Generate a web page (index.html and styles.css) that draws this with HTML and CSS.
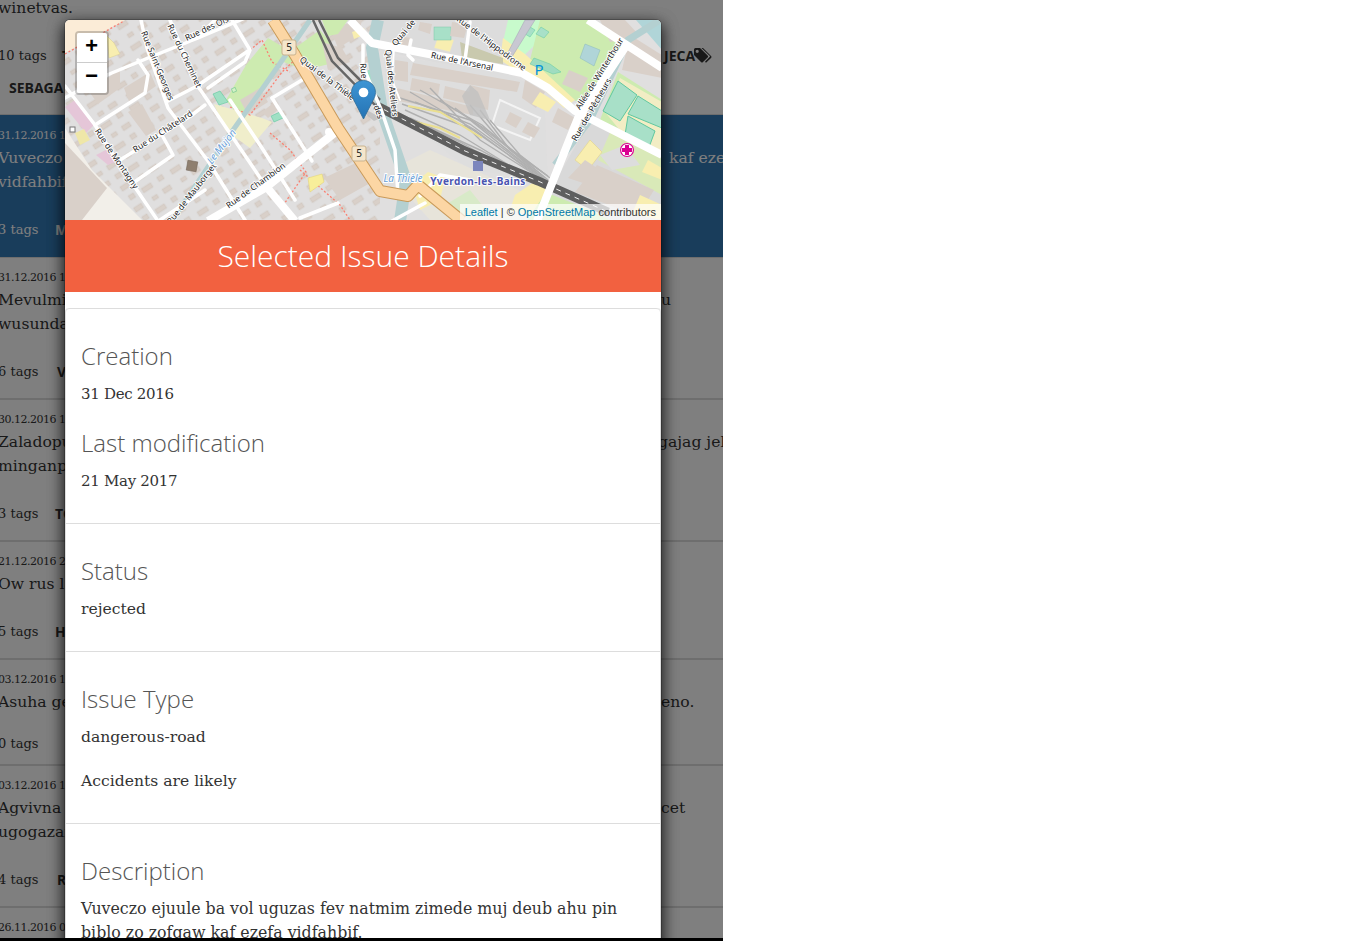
FILE: index.html
```html
<!DOCTYPE html>
<html lang="en">
<head>
<meta charset="utf-8">
<title>Selected Issue Details</title>
<link rel="stylesheet" href="styles.css">
</head>
<body>
<div class="page">
  <div class="list">
    <div class="row first">
      <div class="title"><span class="l">winetvas.</span></div>
      <div class="tags"><span class="count">10 tags</span><b class="tag">TEJA</b><b class="tag tag-right">JECA</b>
        <svg class="tag-icon" viewBox="0 0 18 15"><path d="M0 1.5V7l7 7a1.4 1.4 0 0 0 2 0l4.600-4.600a1.4 1.4 0 0 0 0-2L6.600.4A1.4 1.4 0 0 0 5.600 0H1.500A1.500 1.500 0 0 0 0 1.500zM3.200 4.900a1.600 1.600 0 1 1 0-3.200 1.600 1.600 0 0 1 0 3.200z"/><path d="M9 0l8 8a1.400 1.400 0 0 1 0 2l-5 4.800-1-1 4.600-4.700a1 1 0 0 0 0-1.400L7.500 0z"/></svg>
      </div>
      <div class="tags tags-2"><b class="tag">SEBAGA</b></div>
    </div>
    <div class="row active">
      <div class="date">31.12.2016 11:04</div>
      <div class="title"><span class="l">Vuveczo ejuule ba vol uguzas fev</span><span class="r r-kaf">kaf eze</span></div>
      <div class="title"><span class="l">vidfahbif.</span></div>
      <div class="tags"><span class="count">3 tags</span><b class="tag">MEKU</b></div>
    </div>
    <div class="row">
      <div class="date">31.12.2016 10:12</div>
      <div class="title"><span class="l">Mevulmi ko gewoc ezi</span><span class="r">u</span></div>
      <div class="title"><span class="l">wusundaj.</span></div>
      <div class="tags"><span class="count">6 tags</span><b class="tag tag-wide">VOZ</b></div>
    </div>
    <div class="row">
      <div class="date">30.12.2016 14:20</div>
      <div class="title"><span class="l">Zaladopu ri tenof</span><span class="r r-gaj">gajag jel</span></div>
      <div class="title"><span class="l">minganpo.</span></div>
      <div class="tags"><span class="count">3 tags</span><b class="tag">TOR</b></div>
    </div>
    <div class="row">
      <div class="date">21.12.2016 21:02</div>
      <div class="title"><span class="l">Ow rus lav tu.</span></div>
      <div class="tags"><span class="count">5 tags</span><b class="tag">HEB</b></div>
    </div>
    <div class="row no-tags">
      <div class="date">03.12.2016 16:45</div>
      <div class="title"><span class="l">Asuha ge vone</span><span class="r">eno.</span></div>
      <div class="tags"><span class="count">0 tags</span></div>
    </div>
    <div class="row">
      <div class="date">03.12.2016 11:31</div>
      <div class="title"><span class="l">Agvivna ro dunaf</span><span class="r">cet</span></div>
      <div class="title"><span class="l">ugogazaf.</span></div>
      <div class="tags"><span class="count">4 tags</span><b class="tag tag-wide">RUZ</b></div>
    </div>
    <div class="row">
      <div class="date">26.11.2016 09:17</div>
    </div>
  </div>

  <div class="backdrop"></div>

  <div class="modal">
    <div class="map">
      <svg class="map-art" viewBox="65 20 597 200" xmlns="http://www.w3.org/2000/svg">
        <defs>
          <pattern id="houses" patternUnits="userSpaceOnUse" width="34" height="25" patternTransform="rotate(-33 65 20)">
            <rect x="3" y="3" width="11" height="5" fill="#d9d0c9" stroke="#c8bdb4" stroke-width=".4"/>
            <rect x="22" y="2" width="6" height="5" fill="#d9d0c9" stroke="#c8bdb4" stroke-width=".4"/>
            <rect x="7" y="16" width="6" height="4" fill="#d9d0c9" stroke="#c8bdb4" stroke-width=".4"/>
            <rect x="20" y="15" width="9" height="5" fill="#d9d0c9" stroke="#c8bdb4" stroke-width=".4"/>
          </pattern>
          <linearGradient id="pin" x1="0" y1="0" x2="0" y2="1">
            <stop offset="0" stop-color="#3d95d4"/>
            <stop offset="1" stop-color="#2573b4"/>
          </linearGradient>
        </defs>

        <rect x="65" y="20" width="597" height="200" fill="#e0dfdf"/>
        <rect x="65" y="20" width="315" height="200" fill="url(#houses)"/>
        <!-- land use, west -->
        <polygon points="65,20 125,20 65,53" fill="#fbecd7"/>
        <polyline points="65,54 124,21" class="foot-pink"/>
        <polygon points="65,128 92,170 142,220 65,220" fill="#f2efe9"/>
        <polygon points="65,143 107,188 82,220 65,220" fill="#d9d0c9"/>
        <polygon points="65,107 75,100 94,125 86,133" fill="#e5c6d8"/>
        <polygon points="96,155 110,148 120,160 108,165" fill="#e5c6d8"/>
        <polygon points="107,36 114,43 120,54 109,58" fill="#f8eeb0" stroke="#d8cf90" stroke-width=".5"/>
        <polygon points="75,133 84,129 90,140 80,145" fill="#efe7a8"/>
        <polygon points="88,90 120,70 120,88 98,104" fill="#d9d0c9"/>
        <polygon points="124,88 150,72 156,86 130,104" fill="#d9d0c9"/>
        <polygon points="128,112 142,104 156,130 146,136" fill="#d9d0c9"/>
        <!-- park, west centre -->
        <polygon points="226,100 246,65 268,38 288,50 265,85 240,118" fill="#cdebb0"/>
        <polygon points="278,60 320,30 345,60 305,70" fill="#cdebb0"/>
        <polygon points="214,104 262,118 272,122 250,148 225,130" fill="#f0eecb"/>
        <polygon points="213,94 220,91 228,102 219,105" fill="#9fe0c4" stroke="#60c8a0" stroke-width=".6"/>
        <polygon points="271,116 280,112 283,118 274,122" fill="#9fe0c4" stroke="#60c8a0" stroke-width=".6"/>
        <rect x="232" y="88" width="4" height="4" fill="#d4f2c4" stroke="#6fc68f" stroke-width=".6" transform="rotate(-20 234 90)"/>
        <polygon points="240,100 260,88 268,102 248,115" fill="#d9d0c9"/>
        <polygon points="262,112 272,104 278,110 268,118" fill="#d9d0c9"/>
        <polyline points="230,107 250,115 265,95 282,72 300,55" class="foot-pink"/>
        <polyline points="250,50 262,40 272,62 290,72" class="foot-pink"/>
        <polyline points="270,133 290,150 306,172 280,210" class="foot-pink"/>
        <polyline points="300,170 340,205 350,220" class="foot-pink"/>
        <polygon points="308,178 322,174 324,182 310,192" fill="#f8ee9a" stroke="#e0d070" stroke-width=".5"/>
        <polygon points="324,178 362,160 372,182 340,200" fill="#d9d0c9"/>
        <polygon points="330,28 362,20 358,36 338,48" fill="#d9d0c9"/>
        <polygon points="322,42 342,48 350,62 328,70" fill="#d9d0c9"/>
        <polygon points="352,32 364,28 366,34 354,39" fill="#f8eeb0"/>
        <polygon points="322,20 348,20 338,34 328,36" fill="#cdebb0"/>
        <polygon points="368,70 372,70 372,90 366,90" fill="#9fe0c4"/>

        <!-- land use, east -->
        <polygon points="380,20 540,20 530,75 470,70 380,50" fill="#dcdcdc"/>
        <polygon points="385,55 505,72 530,85 545,108 548,180 470,170 385,105" fill="#dedede"/>
        <polygon points="508,20 545,20 534,46 521,58 503,42" fill="#c8facc"/>
        <polygon points="540,20 590,20 628,46 585,108 545,78 530,60" fill="#cdebb0"/>
        <polygon points="503,38 525,54 575,100 564,108 540,86 500,60" fill="#f8eeb0"/>
        <polygon points="460,42 503,58 503,64 462,58" fill="#c9c9ae"/>
        <polygon points="438,36 454,40 450,52 434,48" fill="#f8eeb0" stroke="#ddd" stroke-width=".5"/>
        <rect x="434" y="27" width="17" height="13" fill="#a8e0c8" stroke="#7cc8a8" stroke-width=".5"/>
        <polygon points="420,22 432,24 430,34 418,30" fill="#d9d0c9"/>
        <polygon points="396,36 412,38 410,48 394,44" fill="#d9d0c9"/>
        <polygon points="452,22 468,24 464,38 450,36" fill="#d9d0c9"/>
        <polygon points="527,25 535,30 530,37 522,32" fill="#a8e0c8" stroke="#60c8a0" stroke-width=".5"/>
        <polygon points="541,27 549,32 544,38 536,34" fill="#a8e0c8" stroke="#60c8a0" stroke-width=".5"/>
        <polygon points="534,58 550,64 561,72 553,74 530,64" fill="#9fdcc0" stroke="#60c8a0" stroke-width=".5"/>
        <polygon points="569,70 588,78 580,92 562,84" fill="#d9d0c9"/>
        <polygon points="585,44 600,50 594,66 580,58" fill="#b0d5d8" stroke="#8ab8bd" stroke-width=".5"/>
        <polygon points="600,20 625,20 640,36 610,42" fill="#d9d0c9"/>
        <polygon points="630,35 662,55 662,78 622,70" fill="#d9d0c9"/>
        <polygon points="636,20 662,20 662,50" fill="#b0d5d8"/>
        <polygon points="600,120 618,72 662,100 662,148" fill="#cdebb0"/>
        <polygon points="605,112 620,78 662,102 662,150 640,155" fill="#f2edc4"/>
        <polygon points="618,81 637,95 620,121 603,111" fill="#a8e0c8" stroke="#60c8a0"/>
        <polygon points="638,96 662,111 662,128 628,114" fill="#a8e0c8" stroke="#60c8a0"/>
        <polygon points="628,116 655,131 648,150 625,135" fill="#a8e0c8" stroke="#60c8a0"/>
        <polygon points="590,120 662,156 662,220 575,220 545,200" fill="#d9d9d9"/>
        <polygon points="612,128 662,156 662,195 598,160" fill="#d9e9b8"/>
        <polygon points="575,160 590,140 602,152 588,170" fill="#f8eeb0" stroke="#e0d48a" stroke-width=".6"/>
        <polygon points="600,155 625,145 640,165 612,170" fill="#dddddd"/>
        <polygon points="568,178 585,160 600,170 592,186" fill="#d9d0c9"/>
        <polygon points="597,165 654,190 638,216 575,192" fill="#d9d0c9"/>
        <polygon points="648,160 662,168 662,180 642,172" fill="#f8eeb0"/>
        <polygon points="540,190 590,210 610,220 520,220" fill="#cdebb0"/>
        <polygon points="640,195 662,205 662,220 632,214" fill="#f8eeb0"/>
        <polygon points="393,87 473,107 473,115 393,100" fill="#d9d0c9"/>
        <polygon points="413,63 520,82 517,92 410,75" fill="#d9d0c9"/>
        <polygon points="395,60 408,62 408,82 395,80" fill="#d9d0c9"/>
        <polygon points="412,78 440,84 438,96 410,90" fill="#d9d0c9"/>
        <polygon points="445,86 470,92 468,104 443,98" fill="#d9d0c9"/>
        <polygon points="470,85 490,90 488,110 468,105" fill="#d9d0c9"/>
        <polygon points="525,80 545,92 536,108 522,98" fill="#d9d0c9"/>
        <polygon points="558,108 575,118 568,130 552,122" fill="#d9d0c9"/>
        <polygon points="540,92 556,102 548,112 532,104" fill="#f8eeb0"/>
        <polygon points="500,100 540,118 530,140 492,125" fill="none" stroke="#f4f4f4" stroke-width="2"/>
        <polygon points="510,112 522,118 516,128 505,122" fill="#d9d0c9"/>
        <polygon points="528,122 540,128 534,138 522,132" fill="#d9d0c9"/>
        <!-- station area -->
        <polygon points="400,165 430,150 470,168 540,200 528,220 430,220 405,192" fill="#e7e4da"/>
        <polygon points="412,185 428,172 445,178 440,200 420,210" fill="#f8eeb0"/>
        <polygon points="445,205 470,190 490,215 470,220" fill="#d8eac8"/>
        <polygon points="515,195 534,182 548,190 530,215 510,210" fill="#f8eeb0"/>

        <!-- canals -->
        <polyline points="310,20 265,85 226,140 172,221" class="canal thin"/>
        <polyline points="378,20 372,48 382,111 406,181 400,221" class="canal"/>
        <polyline points="555,165 590,120 628,40 660,20" class="canal mid"/>

        <!-- rails fan -->
        <g class="fan">
          <polyline points="400,98 470,120 545,180"/>
          <polyline points="402,104 470,128 545,180"/>
          <polyline points="410,92 475,130 545,182"/>
          <polyline points="420,90 482,125 545,180"/>
          <polyline points="430,88 480,140 540,178"/>
          <polyline points="470,105 500,140 548,180"/>
          <polyline points="480,110 510,150 548,176"/>
          <polyline points="490,120 520,155 550,178"/>
          <polyline points="405,110 460,135 530,178"/>
          <polyline points="410,118 480,150 535,180"/>
          <polyline points="415,102 470,124 540,176"/>
          <polyline points="440,100 490,132 545,178"/>
          <polyline points="455,108 505,145 545,174"/>
          <polyline points="400,114 460,142 520,176"/>
        </g>
        <polygon points="470,85 478,92 490,120 470,115 462,96" fill="#c0c0c0" opacity=".8"/>
        <polyline points="408,106 440,112 482,138" class="rail-yellow"/>
        <polyline points="400,118 440,128 460,138" class="rail-yellow"/>
        <!-- main rail -->
        <polyline points="375,105 465,151 538,181 608,212" class="rail"/>
        <polyline points="375,105 465,151 538,181 608,212" class="rail-dash"/>
        <polyline points="313,20 332,61 375,105" class="rail thin"/>
        <polyline points="319,20 338,58 380,100" class="rail thin"/>

        <!-- roads -->
        <g class="road">
          <polyline points="141,20 147,48 168,108 208,161 245,220"/>
          <polyline points="170,20 197,85 208,101 265,185"/>
          <polyline points="65,86 95,125 115,158 158,221"/>
          <polyline points="107,75 148,58 198,38 245,18"/>
          <polyline points="65,98 107,75"/>
          <polyline points="95,125 145,93 148,75 138,60"/>
          <polyline points="120,160 192,115 205,105"/>
          <polyline points="168,101 197,86 248,51"/>
          <polyline points="133,183 173,155 162,135"/>
          <polyline points="208,88 245,62 250,50 232,20"/>
          <polyline points="197,38 215,20"/>
          <polyline points="272,98 302,80"/>
          <polyline points="272,98 312,161"/>
          <polyline points="230,100 262,148 295,200"/>
          <polyline points="338,203 300,218"/>
          <polyline points="160,220 205,190"/>
          <polyline points="394,48 392,80 400,100" class="thin-road"/>
          <polyline points="363,45 363,66 382,112 395,150 398,195"/>
          <polyline points="411,40 408,55 413,60"/>
          <polyline points="465,60 470,22"/>
          <polyline points="420,196 440,175 470,180"/>
          <polyline points="392,221 425,203"/>
        </g>
        <g class="road wide">
          <polyline points="265,188 208,221"/>
          <polyline points="265,188 337,131"/>
          <polyline points="265,185 295,221"/>
          <polyline points="350,20 372,43 465,61 522,73 548,88 575,111 662,155"/>
          <polyline points="537,221 578,118 628,43"/>
          <polyline points="588,20 662,68"/>
        </g>
        <circle cx="329" cy="132" r="4" fill="#fff"/>
        <polyline points="273,20 295,55 338,128 380,191 408,196 418,185 462,221" class="hw-casing"/>
        <polyline points="273,20 295,55 338,128 380,191 408,196 418,185 462,221" class="hw"/>
        <polygon points="525,20 535,20 510,60 505,58" fill="#c8c8d2" stroke="#a9a9b8" stroke-width=".6"/>

        <!-- labels -->
        <g class="lbl">
          <text transform="translate(207 29) rotate(-25)">Rue des Ois</text>
          <text transform="translate(157 66) rotate(68)">Rue Saint-Georges</text>
          <text transform="translate(184 56) rotate(65)">Rue du Cheminet</text>
          <text transform="translate(163 132) rotate(-33)">Rue du Châtelard</text>
          <text transform="translate(116 159) rotate(56)">Rue de Montagny</text>
          <text transform="translate(192 194) rotate(-52)">Rue de Mauborget</text>
          <text transform="translate(256 186) rotate(-36)">Rue de Chambion</text>
          <text transform="translate(327 79) rotate(37)">Quai de la Thièle</text>
          <text transform="translate(363 71) rotate(85)">Rue</text>
          <text transform="translate(378 112) rotate(70)">des</text>
          <text transform="translate(391 83) rotate(84)">Quai des Ateliers</text>
          <text transform="translate(404 33) rotate(-50)">Quai de</text>
          <text transform="translate(462 62) rotate(12)">Rue de l'Arsenal</text>
          <text transform="translate(491 44) rotate(37)">Rue de l'Hippodrome</text>
          <text transform="translate(600 74) rotate(-58)">Allée de Winterthour</text>
          <text transform="translate(592 110) rotate(-60)">Rue des Pêcheurs</text>
        </g>
        <g class="lbl water">
          <text transform="translate(222 147) rotate(-52)">Le Mujon</text>
          <text transform="translate(403 179)">La Thièle</text>
        </g>
        <text class="lbl-city" x="478" y="185">Yverdon-les-Bains</text>
        <text class="lbl-p" x="539" y="75">P</text>

        <!-- symbols -->
        <g class="shield">
          <rect x="282" y="40" width="14" height="15" rx="2"/>
          <text x="289" y="51">5</text>
          <rect x="352" y="146" width="14" height="15" rx="2"/>
          <text x="359" y="157">5</text>
        </g>
        <rect x="187" y="161" width="10" height="10" fill="#8f7f6f" stroke="#6f6255" stroke-width=".5" transform="rotate(10 192 166)"/>
        <rect x="473" y="161" width="10" height="10" fill="#7c86bd"/>
        <rect x="70" y="127" width="5" height="5" fill="#fff" stroke="#777"/>
        <circle cx="627" cy="150" r="7" fill="#da0092"/>
        <circle cx="627" cy="150" r="5.900" fill="#fff"/>
        <path d="M625 145h4v3h3v4h-3v3h-4v-3h-3v-4h3z" fill="#da0092"/>

        <!-- marker -->
        <path d="M374 121c-3-2-7-6-10-9l3-2 14 8z" fill="#000" opacity=".12"/>
        <path d="M363.500 80.500c-6.600 0-12 5.300-12 12 0 2.400.9 4.800 2 6.900l10 19.600 10-19.600c1.100-2.100 2-4.500 2-6.900 0-6.700-5.400-12-12-12z" fill="url(#pin)" stroke="#2e6c97" stroke-width=".8"/>
        <circle cx="363.500" cy="92.500" r="4.800" fill="#fff"/>
      </svg>
      <div class="zoom-ctrl">
        <a class="zoom-btn zoom-in">+</a>
        <a class="zoom-btn">−</a>
      </div>
      <div class="attrib"><a>Leaflet</a> | © <a>OpenStreetMap</a> contributors</div>
    </div>
    <h2 class="modal-head">Selected Issue Details</h2>
    <div class="details">
      <section class="item">
        <h3>Creation</h3>
        <p class="stamp">31 Dec 2016</p>
        <h3 class="next">Last modification</h3>
        <p class="stamp">21 May 2017</p>
      </section>
      <section class="item">
        <h3>Status</h3>
        <p>rejected</p>
      </section>
      <section class="item">
        <h3>Issue Type</h3>
        <p>dangerous-road</p>
        <p>Accidents are likely</p>
      </section>
      <section class="item">
        <h3>Description</h3>
        <p class="desc">Vuveczo ejuule ba vol uguzas fev natmim zimede muj deub ahu pin biblo zo zofgaw kaf ezefa vidfahbif.</p>
      </section>
    </div>
  </div>
</div>
<div class="strip"></div>
</body>
</html>
```
FILE: styles.css
```css
* { box-sizing: border-box; }
html, body { margin: 0; padding: 0; background: #fff; overflow: hidden; height: 100%; }
body { font-family: "DejaVu Serif", "Liberation Serif", serif; color: #333; }

.page { position: relative; width: 723px; height: 938px; overflow: hidden; background: #fff; }
.strip { height: 3px; width: 723px; background: #000; }

/* background list */
.list { margin: -4px 0 0 -2px; width: 725px; }
.row { padding: 10px 0; border-top: 1px solid #ddd; border-bottom: 1px solid #ddd; font-size: 15.600px; }
.row.first { padding-top: 0; border-top: 0; }
.row.active { background: #337ab7; color: #fff; border-color: #337ab7; }
.date { font-size: 11px; letter-spacing: -.5px; line-height: 20px; white-space: nowrap; }
.title { display: flex; line-height: 24px; height: 24px; white-space: nowrap; overflow: hidden; }
.title .l { width: 663px; flex: none; overflow: hidden; }
.title .r { flex: none; }
.r-kaf { padding-left: 8px; }
.title .r-gaj { margin-left: -3px; }
.tags { display: flex; align-items: center; height: 34px; margin-top: 18px; white-space: nowrap; font-size: 13px; }
.tags-2 { margin-top: 0; height: 30px; margin-bottom: 2px; }
.no-tags .tags { height: 22px; }
.count { width: 57px; flex: none; }
.tag { font-family: "Open Sans", sans-serif; font-weight: 700; font-size: 14px; flex: none; width: 606px; color: #333; }
.row.active .tag { color: #fff; }
.tag-wide { margin-left: 2px; }
.tags-2 .tag { margin-left: 11px; }
.first .tags:not(.tags-2) .tag { width: 609px; margin-left: 7px; }
.first .tags:not(.tags-2) .tag.tag-right { width: 30px; margin-left: -7px; }
.tag-icon { width: 18px; height: 15px; flex: none; fill: #333; }

.backdrop { position: absolute; inset: 0; background: rgba(0, 0, 0, .5); }

/* modal */
.modal {
  position: absolute; left: 64px; top: 19px; width: 598px; height: 940px;
  background: #fff; border: 1px solid rgba(0, 0, 0, .2); border-radius: 6px;
  box-shadow: 0 5px 15px rgba(0, 0, 0, .5), 0 5px 15px rgba(0, 0, 0, .5); background-clip: padding-box;
}
.map { position: relative; height: 200px; overflow: hidden; border-radius: 5px 5px 0 0; }
.map-art { display: block; width: 597px; height: 200px; }
.foot-pink { fill: none; stroke: #fa8072; stroke-width: 1.300; stroke-dasharray: 2 2; }
.canal { fill: none; stroke: #b4d0d1; stroke-width: 12; }
.canal.thin { stroke-width: 5; }
.canal.mid { stroke-width: 7; }
.fan polyline { fill: none; stroke: #b0b0b0; stroke-width: 1.400; }
.rail-yellow { fill: none; stroke: #eadf90; stroke-width: 2; }
.rail { fill: none; stroke: #5f5f5f; stroke-width: 9; }
.rail.thin { stroke-width: 2.500; stroke: #666; }
.rail-dash { fill: none; stroke: #eee; stroke-width: 1; stroke-dasharray: 5 5; }
.road polyline { fill: none; stroke: #fff; stroke-width: 3.500; stroke-linejoin: round; stroke-linecap: round; }
.road.wide polyline { stroke-width: 8; stroke-linecap: butt; }
.road polyline.thin-road { stroke-width: 2; }
.hw-casing { fill: none; stroke: #c99a5a; stroke-width: 12; stroke-linejoin: round; }
.hw { fill: none; stroke: #fcd6a4; stroke-width: 10; stroke-linejoin: round; }
.lbl text {
  font-family: "Noto Sans", "Open Sans", sans-serif; font-size: 8.500px; text-anchor: middle;
  fill: #222; stroke: #fff; stroke-width: 1.800; paint-order: stroke; dominant-baseline: middle;
}
.lbl.water text { font-style: italic; font-size: 10px; fill: #6a9fd8; }
.lbl-city {
  font-family: "Noto Sans", sans-serif; font-weight: 700; font-size: 10px; text-anchor: middle;
  fill: #4a55b0; stroke: #fff; stroke-width: 1.800; paint-order: stroke; letter-spacing: .4px;
}
.lbl-p { font-family: "Noto Sans", sans-serif; font-size: 15px; text-anchor: middle; fill: #0092da; }
.shield rect { fill: #f5e6cc; stroke: #c9b38f; stroke-width: 1; }
.shield text { font-family: "Noto Sans", sans-serif; font-size: 10px; text-anchor: middle; fill: #222; }

.zoom-ctrl {
  position: absolute; left: 10px; top: 11px; width: 34px;
  border: 2px solid rgba(0, 0, 0, .2); border-radius: 4px; background-clip: padding-box;
}
.zoom-btn {
  display: block; width: 30px; height: 30px; background: #fff; color: #000; text-align: center; text-indent: -1px;
  font: bold 22px/30px "Liberation Mono", monospace; border-radius: 0 0 2px 2px;
}
.zoom-in { border-bottom: 1px solid #ccc; border-radius: 2px 2px 0 0; }
.attrib {
  position: absolute; right: 0; bottom: 0; padding: 0 5px; height: 16px;
  background: rgba(255, 255, 255, .7); color: #333;
  font: 11px/16px "Liberation Sans", Arial, sans-serif; white-space: nowrap;
}
.attrib a { color: #0078a8; }

.modal-head {
  margin: 0; height: 72px; background: #f26140; color: #fff; text-align: center;
  font: 300 30px/72px "Open Sans", sans-serif;
}
.details { margin-top: 16px; border-left: 1px solid #ddd; border-right: 1px solid #ddd; border-radius: 4px 4px 0 0; }
.item { padding: 30px 15px 10px; border-top: 1px solid #ddd; }
.item:first-child { border-radius: 4px 4px 0 0; }
.item h3 { margin: 0 0 9px; font: 300 24px/34px "Open Sans", sans-serif; color: #555; }
.item h3.next { margin-top: 20px; }
.item p { margin: 0 0 20px; font-size: 15.600px; line-height: 24px; color: #333; }
.item p.stamp { font-size: 15px; letter-spacing: -.3px; }
.item p.desc { font-size: 15.800px; }
.item .stamp:has(+ h3.next) { margin-bottom: 0; }
```
